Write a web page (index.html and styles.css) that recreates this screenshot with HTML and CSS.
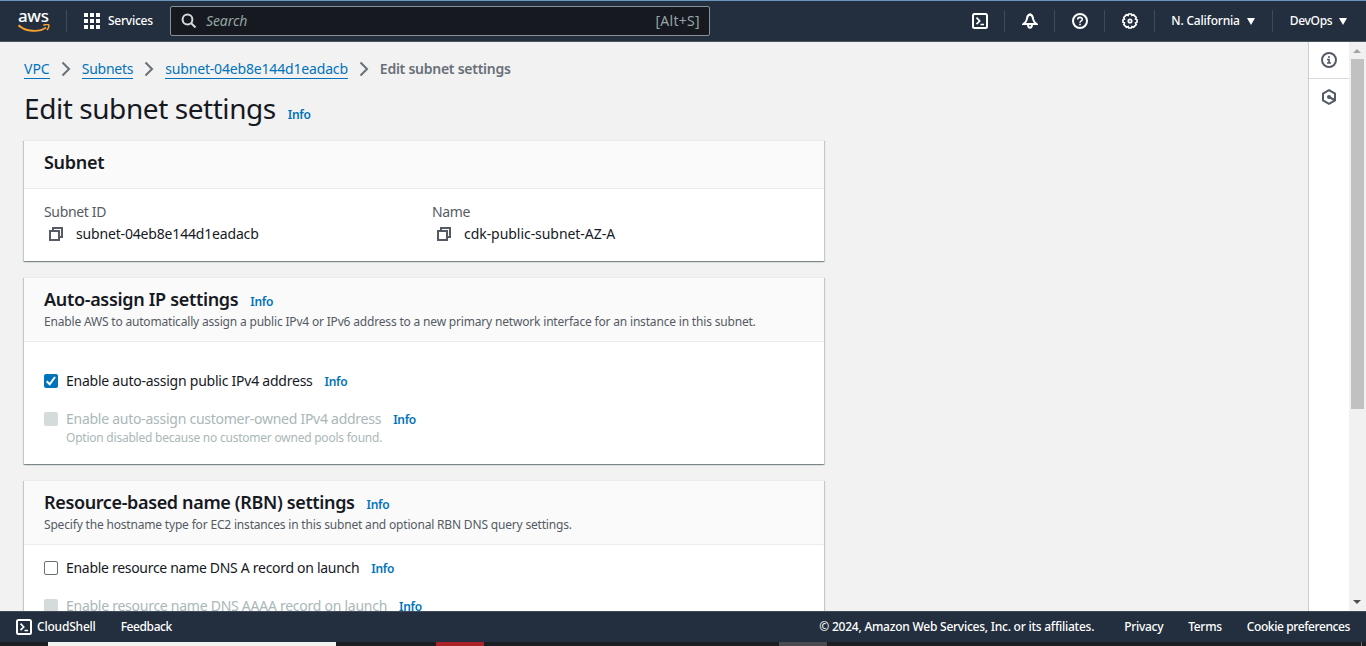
FILE: index.html
```html
<!DOCTYPE html>
<html lang="en">
<head>
<meta charset="utf-8">
<title>Edit subnet settings</title>
<link rel="stylesheet" href="styles.css">
</head>
<body>
<svg class="sprite" width="0" height="0">
  <symbol id="shell" viewBox="0 0 16 16"><rect x="1" y="1" width="14" height="14" rx="1.5"/><path d="M4.500 4.600 7.700 8 4.500 11.200M8.500 11.500H12" stroke-width="1.700"/></symbol>
  <symbol id="copy" viewBox="0 0 16 16"><path d="M2 5h9v9H2zM5 5V2h9v9h-3"/></symbol>
  <symbol id="chevron" viewBox="0 0 10 16"><path d="M1.5 1.5 8 8l-6.5 6.5"/></symbol>
</svg>
<div class="screen">
  <header class="topbar">
    <div class="logo"><span class="logo-word">aws</span>
      <svg class="smile" width="32" height="9" viewBox="0 0 32 9"><path d="M.5 1.3C8 8 21 8.500 28 3.500" fill="none" stroke="#f5a033" stroke-width="1.900"/><path d="M25.300 1.300c2-.9 5-1 5.500-.3.4 1-.5 3.800-2 5" fill="none" stroke="#f5a033" stroke-width="1.500"/></svg>
    </div>
    <div class="services">
      <svg width="16" height="16" viewBox="0 0 16 16" fill="#fff"><path d="M0 0h4v4H0zM6 0h4v4H6zM12 0h4v4h-4zM0 6h4v4H0zM6 6h4v4H6zM12 6h4v4h-4zM0 12h4v4H0zM6 12h4v4H6zM12 12h4v4h-4z"/></svg>
      <span class="t-services">Services</span>
    </div>
    <div class="search">
      <svg width="16" height="16" viewBox="0 0 16 16" fill="none" stroke="#d5dbdb" stroke-width="2"><circle cx="6.500" cy="6.500" r="4.900"/><path d="m10 10 4.500 4.500"/></svg>
      <span class="placeholder">Search</span><span class="shortcut">[Alt+S]</span>
    </div>
    <nav class="tools">
      <span class="tool"><svg class="ico" width="16" height="16"><use href="#shell"/></svg></span>
      <span class="tool"><svg class="ico" width="16" height="16" viewBox="0 0 16 16"><path d="M8 1.300C5.800 2 5 4 4.800 6.300 4.600 8 3.300 9.500 1.500 11h13c-1.800-1.500-3.100-3-3.300-4.700C11 4 10.200 2 8 1.300zM6 11.500c0 4.200 4 4.200 4 0"/></svg></span>
      <span class="tool"><svg class="ico" width="16" height="16" viewBox="0 0 16 16"><circle cx="8" cy="8" r="7"/><path d="M5.700 6.600c0-3 4.600-2.900 4.600-.2C10.300 7.900 8 8 8 9.700M8 10.700v1.600" stroke-width="1.600"/></svg></span>
      <span class="tool"><svg class="ico" width="16" height="16" viewBox="0 0 16 16"><path d="m6.700 1h2.600l.6 1.400 1.700-.6 2.600 2.600-.6 1.700 1.400.6v2.600l-1.400.6.6 1.700-2.600 2.600-1.700-.6-.6 1.400H6.700l-.6-1.400-1.700.6-2.600-2.600.6-1.700L1 9.300V6.700l1.400-.6-.6-1.700 2.600-2.600 1.700.6z" stroke-width="1.700"/><circle cx="8" cy="8" r="1.700" stroke-width="1.700"/></svg></span>
      <span class="tool region"><span class="t-region">N. California</span><i class="caret"></i></span>
      <span class="tool account"><span class="t-account">DevOps</span><i class="caret"></i></span>
    </nav>
  </header>
  <div class="workspace">
    <main class="content">
      <nav class="crumbs">
        <a class="c1">VPC</a><svg class="chev" width="10" height="16"><use href="#chevron"/></svg>
        <a class="c2">Subnets</a><svg class="chev" width="10" height="16"><use href="#chevron"/></svg>
        <a class="c3">subnet-04eb8e144d1eadacb</a><svg class="chev" width="10" height="16"><use href="#chevron"/></svg>
        <b class="c4">Edit subnet settings</b>
      </nav>
      <h1><span class="t-title">Edit subnet settings</span><a class="info">Info</a></h1>
      <section class="card">
        <div class="card-head short"><h2><span class="h-subnet">Subnet</span></h2></div>
        <div class="details">
          <div><div class="label l-id">Subnet ID</div><div class="value"><svg class="copy" width="16" height="16"><use href="#copy"/></svg><span class="v-id">subnet-04eb8e144d1eadacb</span></div></div>
          <div><div class="label l-name">Name</div><div class="value"><svg class="copy" width="16" height="16"><use href="#copy"/></svg><span class="v-name">cdk-public-subnet-AZ-A</span></div></div>
        </div>
      </section>
      <section class="card">
        <div class="card-head"><h2><span class="h-ip">Auto-assign IP settings</span><a class="info">Info</a></h2><p class="p-ip">Enable AWS to automatically assign a public IPv4 or IPv6 address to a new primary network interface for an instance in this subnet.</p></div>
        <div class="options ip">
          <div class="option"><span class="box checked"><svg width="14" height="14" viewBox="0 0 14 14"><path d="m2.700 7.300 3 3 5.300-7.300" fill="none" stroke="#fff" stroke-width="2"/></svg></span><span class="o1">Enable auto-assign public IPv4 address</span><a class="info">Info</a></div>
          <div class="option disabled"><span class="box"></span><span class="o2">Enable auto-assign customer-owned IPv4 address</span><a class="info">Info</a></div>
          <p class="hint">Option disabled because no customer owned pools found.</p>
        </div>
      </section>
      <section class="card">
        <div class="card-head"><h2><span class="h-rbn">Resource-based name (RBN) settings</span><a class="info">Info</a></h2><p class="p-rbn">Specify the hostname type for EC2 instances in this subnet and optional RBN DNS query settings.</p></div>
        <div class="options rbn">
          <div class="option"><span class="box"></span><span class="o3">Enable resource name DNS A record on launch</span><a class="info">Info</a></div>
          <div class="option disabled"><span class="box"></span><span class="o4">Enable resource name DNS AAAA record on launch</span><a class="info">Info</a></div>
        </div>
      </section>
    </main>
    <aside class="rail">
      <span class="rail-item first"><svg class="ico dark" width="16" height="16" viewBox="0 0 16 16"><circle cx="8" cy="8" r="7"/><path d="M6 7.500h2V11M6 11h4M7 5h2" stroke-width="1.700"/></svg></span>
      <span class="rail-item"><svg class="ico dark" width="16" height="16" viewBox="0 0 16 16"><path d="m8 1.200 6 3.400v6.800l-6 3.400-6-3.400V4.600z"/><circle cx="8" cy="8" r="1"/><path d="m8 8 5.500 3"/></svg></span>
    </aside>
    <div class="scrollbar"><i class="up"></i><i class="thumb"></i><i class="down"></i></div>
  </div>
  <footer class="footer">
    <svg class="ico" width="16" height="16"><use href="#shell"/></svg><span class="f1">CloudShell</span><span class="f2">Feedback</span>
    <span class="f3">© 2024, Amazon Web Services, Inc. or its affiliates.</span><span class="f4">Privacy</span><span class="f5">Terms</span><span class="f6">Cookie preferences</span>
  </footer>
  <div class="taskbar"><i class="task-light"></i><i class="task-red"></i><i class="task-gray"></i><i class="task-edge"></i></div>
</div>
</body>
</html>
```
FILE: styles.css
```css
* { box-sizing: border-box; }
body { margin: 0; font: 14px/22px "Noto Sans", "Open Sans", sans-serif; color: #16191f; overflow: hidden; }
h1, h2, p { margin: 0; }
svg { display: block; flex: none; }
span, a, b { white-space: nowrap; }
.sprite { position: absolute; }
.screen { height: 646px; display: flex; flex-direction: column; }
.ico { fill: none; stroke: #fff; stroke-width: 2; }
.ico.dark { stroke: #545b64; }

.topbar { height: 42px; flex: none; display: flex; align-items: center; background: #232f3e; border-top: 1px solid #6796bf; border-bottom: 1px solid #4b5560; color: #fff; font-size: 12px; font-weight: 500; }
.logo { width: 67px; height: 22px; padding-left: 18px; border-right: 1px solid #414b58; }
.logo-word { display: block; height: 13px; font: 500 17px/11px "Noto Sans", sans-serif; letter-spacing: -.4px; }
.smile { margin-top: 1px; }
.services { width: 103px; padding-left: 17px; display: flex; align-items: center; gap: 8px; }
.t-services { letter-spacing: -.25px; }
.search { width: 540px; height: 30px; border: 1px solid #879196; border-radius: 2px; background: #16191f; display: flex; align-items: center; padding: 0 9px 0 10px; gap: 9px; color: #95a5a6; font-size: 14px; font-weight: 400; }
.placeholder { flex: 1; font-style: italic; letter-spacing: -.1px; }
.shortcut { letter-spacing: .3px; }
.tools { margin-left: auto; display: flex; align-items: center; }
.tool { width: 50px; height: 22px; display: flex; align-items: center; justify-content: center; border-right: 1px solid #414b58; }
.region { width: 118px; gap: 7px; padding-right: 1px; letter-spacing: -.2px; }
.account { width: 93px; border: 0; gap: 7px; padding-right: 2px; letter-spacing: -.3px; }
.caret { border: 4px solid transparent; border-top: 7px solid #fff; border-bottom: 0; }

.workspace { flex: 1; min-height: 0; display: flex; background: #f2f3f3; background: #f2f2f2; }
.content { flex: 1; padding: 16px 0 0 24px; overflow: hidden; }
.crumbs { height: 22px; display: flex; align-items: center; }
.crumbs a { color: #0073bb; border-bottom: 1px solid #0073bb; line-height: 18px; margin-top: 1px; }
.crumbs b { color: #687078; font-weight: 600; }
.c2 { letter-spacing: -.25px; }
.c3 { letter-spacing: -.17px; }
.c4 { letter-spacing: -.26px; }
.chev { margin: 0 11px; fill: none; stroke: #687078; stroke-width: 2; }
h1 { height: 60px; padding-top: 11px; display: flex; align-items: baseline; font-weight: 400; font-size: 28px; line-height: 35px; }
.t-title { letter-spacing: -.43px; }
.info { margin-left: 12px; color: #0073bb; font-size: 12px; font-weight: 600; line-height: 18px; letter-spacing: -.3px; }
.card { width: 800px; margin-bottom: 16px; background: #fff; border-top: 1px solid #eaeded; box-shadow: 0 1px 1px 0 rgba(0,28,36,.3), 1px 1px 1px 0 rgba(0,28,36,.15), -1px 1px 1px 0 rgba(0,28,36,.15); }
.card-head { height: 64px; padding: 10px 20px 0; background: #fafafa; border-bottom: 1px solid #eaeded; }
.card-head.short { height: 48px; }
h2 { display: flex; align-items: baseline; font-size: 18px; line-height: 22px; font-weight: 600; }
.h-subnet { letter-spacing: -.3px; }
.h-ip { letter-spacing: -.32px; }
.h-rbn { letter-spacing: -.36px; }
.card-head p { color: #545b64; font-size: 12px; line-height: 21px; white-space: nowrap; letter-spacing: -.18px; }
.details { height: 72px; padding: 12px 20px 0; display: grid; grid-template-columns: 388px 1fr; }
.label { color: #545b64; letter-spacing: -.35px; }
.value { display: flex; align-items: center; }
.v-id { letter-spacing: -.17px; }
.v-name { letter-spacing: -.05px; }
.copy { margin: 0 12px 0 4px; fill: none; stroke: #545b64; stroke-width: 2; }
.options { padding-left: 20px; }
.ip { height: 122px; padding-top: 28px; }
.rbn { height: 122px; padding-top: 12px; }
.option { height: 22px; display: flex; align-items: baseline; margin-bottom: 16px; }
.option.disabled { color: #aab7b8; margin-bottom: 0; }
.o1 { letter-spacing: -.24px; }
.o2, .o4 { letter-spacing: -.26px; }
.o3 { letter-spacing: -.3px; }
.box { width: 14px; height: 14px; margin-right: 8px; align-self: center; border: 1px solid #687078; border-radius: 2px; background: #fff; }
.box.checked { border: 0; background: #0073bb; }
.disabled .box { border: 0; background: #d5dbdb; }
.hint { padding-left: 22px; color: #aab7b8; font-size: 12px; line-height: 16px; letter-spacing: -.23px; }

.rail { width: 41px; background: #fff; border-left: 1px solid #c9cfd0; }
.rail-item { height: 36px; display: flex; align-items: center; justify-content: center; }
.rail-item.first { border-bottom: 1px solid #d5dbdb; height: 37px; }
.scrollbar { width: 17px; background: #f1f1f1; display: flex; flex-direction: column; align-items: center; padding: 7px 1px 7px 0; }
.up, .down { border: 4px solid transparent; }
.up { border-top: 0; border-bottom-color: #a3a3a3; }
.down { border-bottom: 0; border-top-color: #505050; margin-top: auto; }
.thumb { width: 13px; height: 350px; margin-top: 6px; background: #c1c1c1; }

.footer { height: 31px; flex: none; display: flex; align-items: center; padding-left: 16px; background: #232f3e; border-top: 1px solid #414b58; color: #fff; font-size: 12px; font-weight: 500; }
.f1 { margin-left: 5px; letter-spacing: -.2px; }
.f2 { margin-left: 25px; letter-spacing: -.4px; }
.f3 { margin-left: auto; letter-spacing: -.24px; }
.f4 { margin-left: 30px; letter-spacing: -.3px; }
.f5 { margin-left: 25px; letter-spacing: -.3px; }
.f6 { margin: 0 16px 0 25px; letter-spacing: -.4px; }
.taskbar { height: 4px; flex: none; display: flex; background: #1b1f24; }
.task-light { width: 288px; margin-left: 48px; background: #f2f2f2; }
.task-red { width: 48px; margin-left: 100px; background: #ab2328; }
.task-gray { width: 48px; margin-left: 295px; background: #494b51; }
.task-edge { width: 1px; margin-left: auto; margin-right: 4px; background: #6c7075; }
```
